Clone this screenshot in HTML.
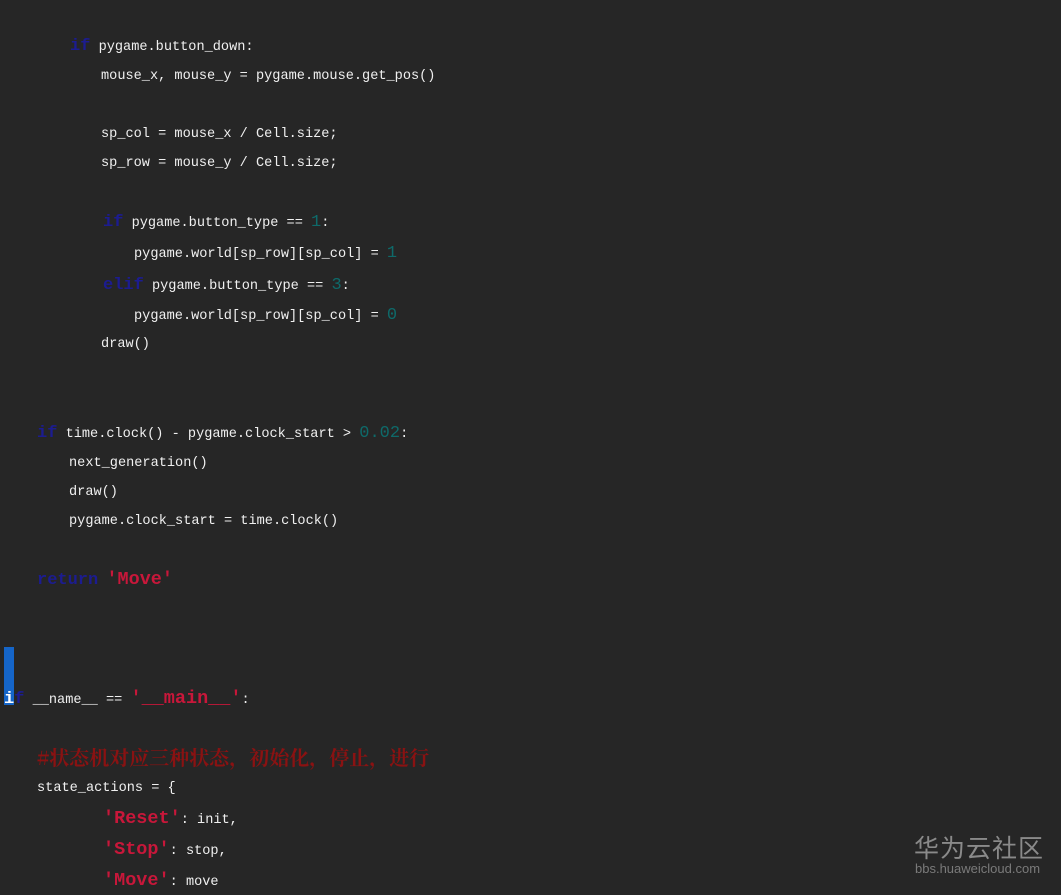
<!DOCTYPE html>
<html><head><meta charset="utf-8"><style>
html,body{margin:0;padding:0}
body{width:1061px;height:895px;background:#262626;position:relative;overflow:hidden;font-family:"Liberation Mono",monospace;font-size:13.6px;color:#f0f0f0}
.l{position:absolute;height:24px;line-height:24px;white-space:pre}
.k{color:#1c1c90;font-size:17px;font-weight:bold}
.n{color:#0e6a6a;font-size:17px}
.s{color:#c8173a;font-size:18.5px;font-weight:bold}
.c{color:#8a1212;font-family:"Noto Serif CJK SC","Liberation Serif",serif;font-size:20px;font-weight:bold}
</style></head><body>
<div class="l" style="left:70px;top:35px"><span class="k">if</span> pygame.button_down:</div>
<div class="l" style="left:101px;top:65px">mouse_x, mouse_y = pygame.mouse.get_pos()</div>
<div class="l" style="left:101px;top:123px">sp_col = mouse_x / Cell.size;</div>
<div class="l" style="left:101px;top:152px">sp_row = mouse_y / Cell.size;</div>
<div class="l" style="left:103px;top:211px"><span class="k">if</span> pygame.button_type == <span class="n">1</span>:</div>
<div class="l" style="left:134px;top:242px">pygame.world[sp_row][sp_col] = <span class="n">1</span></div>
<div class="l" style="left:103px;top:274px"><span class="k">elif</span> pygame.button_type == <span class="n">3</span>:</div>
<div class="l" style="left:134px;top:304px">pygame.world[sp_row][sp_col] = <span class="n">0</span></div>
<div class="l" style="left:101px;top:333px">draw()</div>
<div class="l" style="left:37px;top:422px"><span class="k">if</span> time.clock() - pygame.clock_start &gt; <span class="n">0.02</span>:</div>
<div class="l" style="left:69px;top:452px">next_generation()</div>
<div class="l" style="left:69px;top:481px">draw()</div>
<div class="l" style="left:69px;top:510px">pygame.clock_start = time.clock()</div>
<div class="l" style="left:37px;top:568px"><span class="k">return</span> <span class="s">'Move'</span></div>
<div style="position:absolute;left:4px;top:647px;width:10px;height:58px;background:#1565c8"></div>
<div class="l" style="left:4px;top:687px"><span class="k" style="color:#fff">i</span><span class="k">f</span> __name__ == <span class="s">'__main__'</span>:</div>
<div class="l" style="left:37px;top:745px"><span class="c">#状态机对应三种状态，初始化，停止，进行</span></div>
<div class="l" style="left:37px;top:777px">state_actions = {</div>
<div class="l" style="left:103px;top:807px"><span class="s">'Reset'</span>: init,</div>
<div class="l" style="left:103px;top:838px"><span class="s">'Stop'</span>: stop,</div>
<div class="l" style="left:103px;top:869px"><span class="s">'Move'</span>: move</div>
<div style="position:absolute;left:914px;top:829px;font-family:'Noto Sans CJK SC',sans-serif;font-size:25px;color:#8a8a8a;letter-spacing:1px">华为云社区</div>
<div style="position:absolute;left:915px;top:861px;font-family:'Liberation Sans',sans-serif;font-size:13px;color:#7a7a7a">bbs.huaweicloud.com</div>
</body></html>
